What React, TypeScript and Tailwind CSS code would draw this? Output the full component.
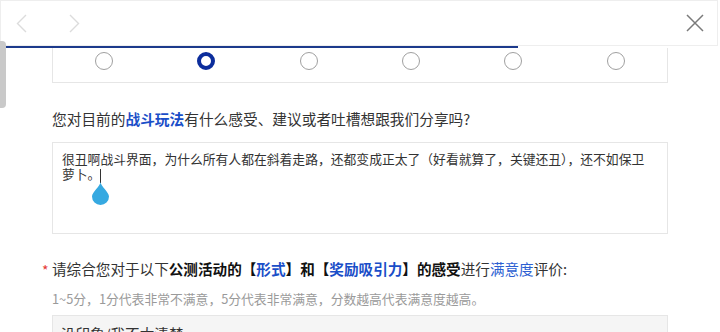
const radios = [false, true, false, false, false, false];

const App = () => {
  return (
    <div
      className="relative w-[720px] h-[332px] overflow-hidden bg-white text-[#333]"
      style={{ fontFamily: '"Noto Sans CJK SC", "Noto Sans", sans-serif' }}
    >
      {/* header */}
      <div className="flex h-[46px] w-[718px] items-center justify-between border border-[#eeeeee] bg-white px-[15px]">
        <div className="flex items-center gap-x-[42px]">
          <svg width="11" height="19" viewBox="0 0 11 19" fill="none">
            <path d="M10 1 L1.5 9.5 L10 18" stroke="#dcdcdc" strokeWidth="1.4" />
          </svg>
          <svg width="11" height="19" viewBox="0 0 11 19" fill="none">
            <path d="M1 1 L9.5 9.5 L1 18" stroke="#dcdcdc" strokeWidth="1.4" />
          </svg>
        </div>
        <svg width="18" height="18" viewBox="0 0 18 18" fill="none" className="mr-[-2px]">
          <path d="M1 1 L17 17 M17 1 L1 17" stroke="#7a7a7a" strokeWidth="1.5" />
        </svg>
      </div>
      <div className="h-[2px] w-[518px] bg-[#1c3a8c]" />

      {/* scrollbar */}
      <div className="absolute left-0 top-[41px] h-[67px] w-[6px] rounded-r-[4px] bg-[#c9c9c9]" />

      <div className="px-[52px]">
        {/* radio row, top clipped by header */}
        <div className="grid w-[616px] grid-cols-6 border border-t-0 border-[#e6e6e6] pt-[4px] pb-[12px]">
          {radios.map((on, i) => (
            <div key={i} className="flex justify-center">
              {on ? (
                <div className="h-[18px] w-[18px] rounded-full border-[4px] border-[#0c2d9c]" />
              ) : (
                <div className="h-[18px] w-[18px] rounded-full border border-[#a0a0a0]" />
              )}
            </div>
          ))}
        </div>

        <p className="mt-[26px] text-[14.7px] leading-[20px] text-[#333]">
          您对目前的<span className="font-bold text-[#1a4ec8]">战斗玩法</span>
          有什么感受、建议或者吐槽想跟我们分享吗?
        </p>

        <div className="relative mt-[13px] h-[92px] w-[616px] border border-[#e6e6e6] pl-[9px] pr-[10px] pt-[8px]">
          <p className="text-[12.8px] leading-[15px] text-[#333]">
            很丑啊战斗界面，为什么所有人都在斜着走路，还都变成正太了（好看就算了，关键还丑），还不如保卫萝卜。
          </p>
          {/* caret + selection handle */}
          <div className="absolute left-[47px] top-[26px] h-[14px] w-[1px] bg-[#333]" />
          <svg className="absolute left-[38px] top-[39px]" width="19" height="23" viewBox="0 0 19 23">
            <path
              d="M9.5 0 C9.5 4 1 10 1 14.5 A8.5 8.5 0 0 0 18 14.5 C18 10 9.5 4 9.5 0 Z"
              fill="#36a9e1"
            />
          </svg>
        </div>

        <p className="relative mt-[25px] text-[14.6px] leading-[20px] text-[#333]">
          <span className="absolute left-[-10px] top-[1px] text-[14px] text-[#e53935]">*</span>
          请综合您对于以下<span className="font-bold text-[#111]">公测活动的【</span>
          <span className="font-bold text-[#1a4ec8]">形式</span>
          <span className="font-bold text-[#111]">】和【</span>
          <span className="font-bold text-[#1a4ec8]">奖励吸引力</span>
          <span className="font-bold text-[#111]">】的感受</span>进行
          <span className="text-[#2d5fd2]">满意度</span>评价:
        </p>

        <p className="mt-[10px] text-[12.8px] leading-[20px] text-[#9a9a9a]">
          1~5分，1分代表非常不满意，5分代表非常满意，分数越高代表满意度越高。
        </p>

        <div className="mt-[6px] h-[40px] w-[616px] border border-[#e6e6e6] bg-[#f5f5f5] pl-[8px] pt-[8px]">
          <p className="text-[14.6px] leading-[20px] text-[#333]">没印象/我不太清楚</p>
        </div>
      </div>
    </div>
  );
};

export default App;
